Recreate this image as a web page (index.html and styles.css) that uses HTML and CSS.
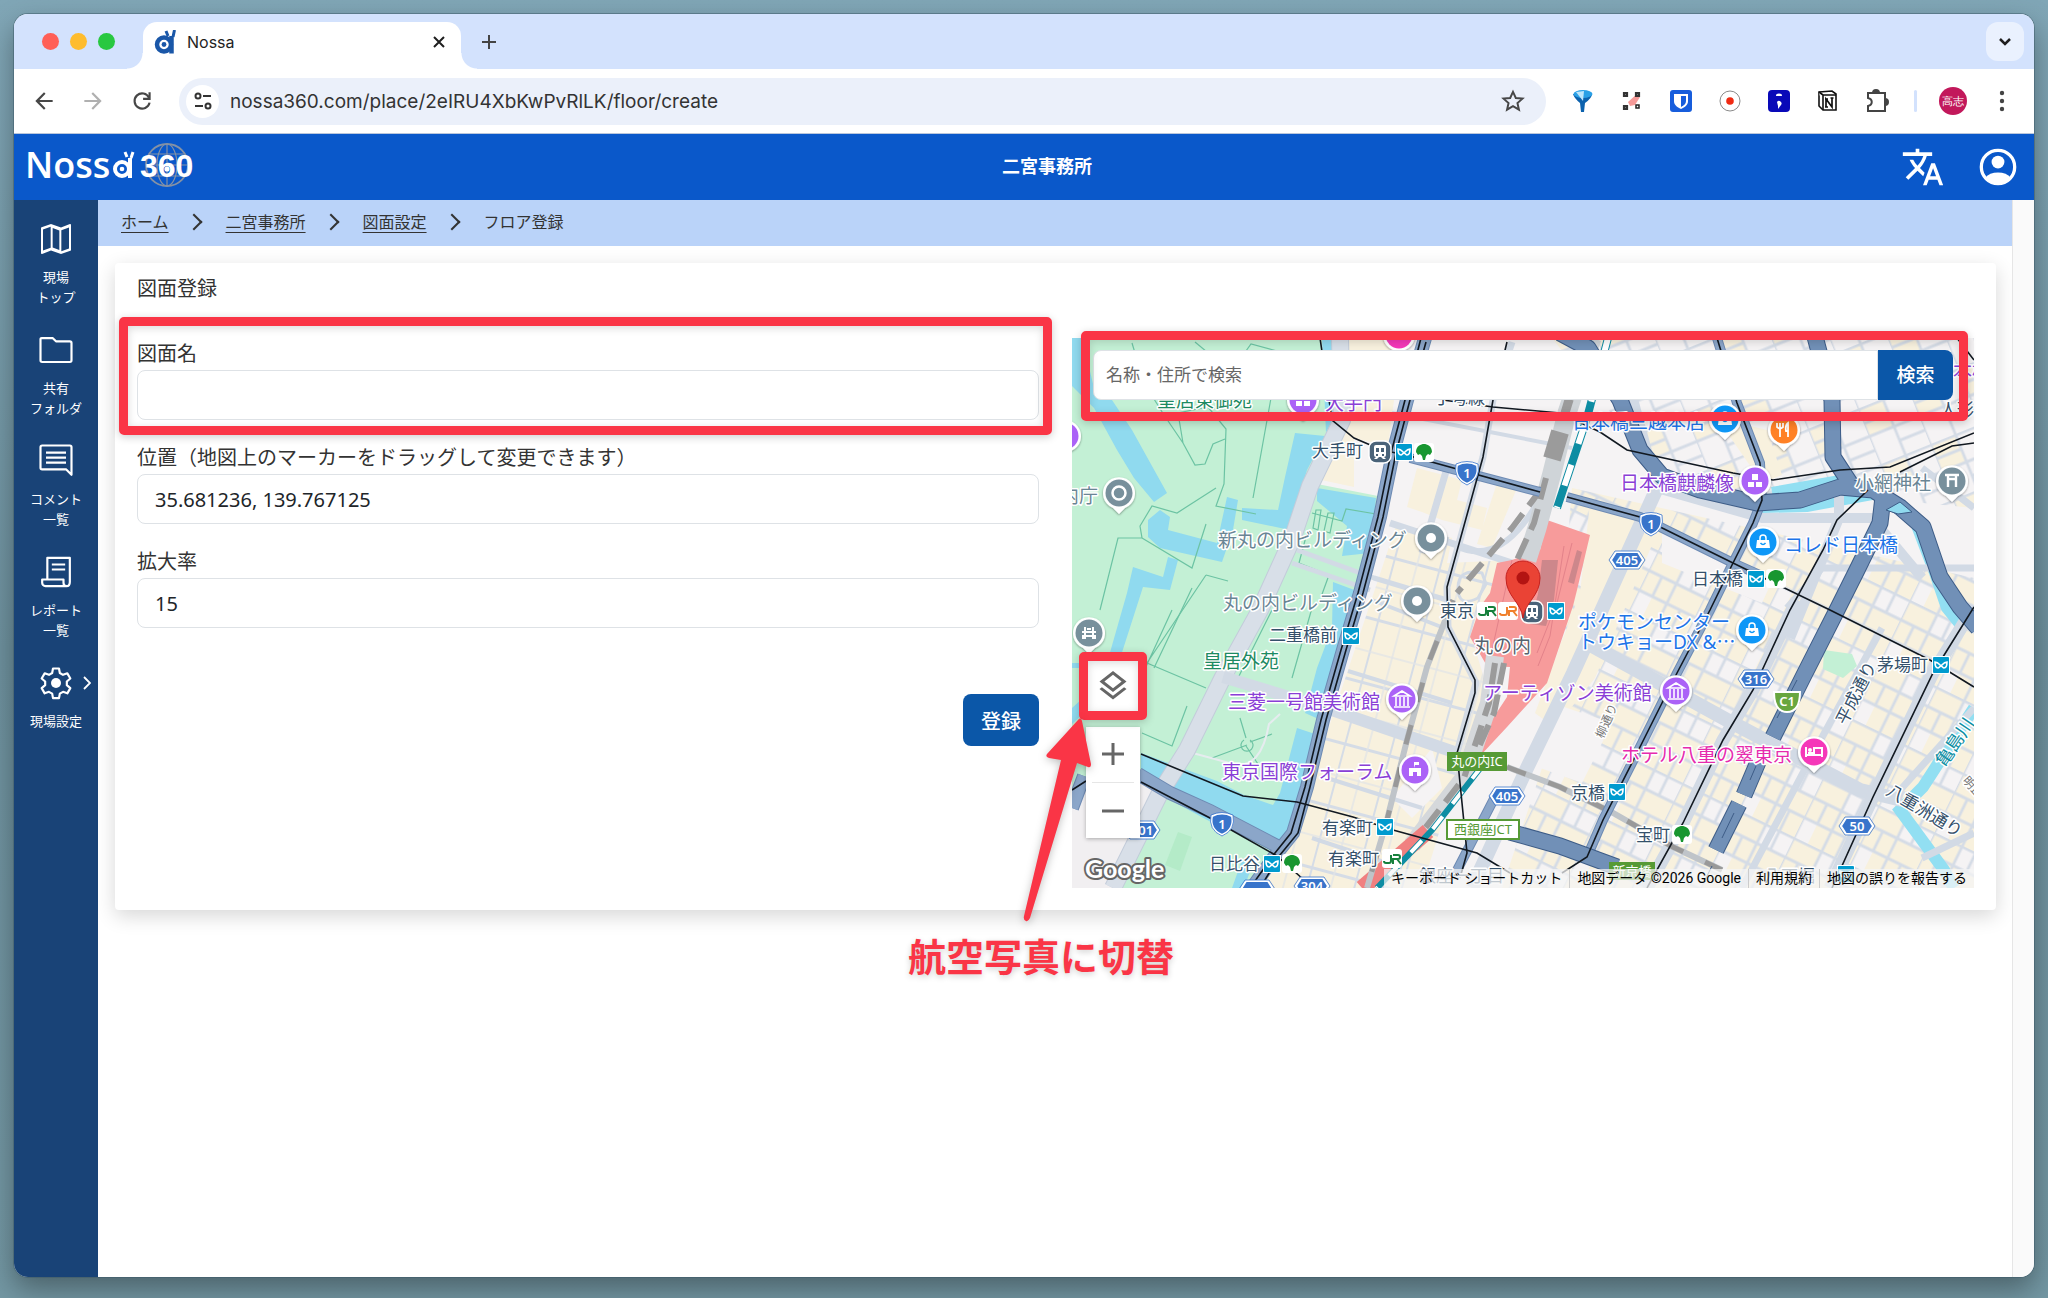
FILE: index.html
```html
<!DOCTYPE html>
<html lang="ja">
<head>
  <meta charset="UTF-8">
  <title>Nossa</title>
  <meta name="viewport" content="width=device-width, initial-scale=1.0">
  <link rel="stylesheet" href="styles.css">
</head>
<body>
  <div class="window">
    <div class="tab-strip">
      <div class="lights"><i class="red"></i><i class="yellow"></i><i class="green"></i></div>
      <div class="tab">
        <svg width="22" height="24" viewBox="0 0 22 24" fill="none" stroke="#1a57a8"><circle cx="10" cy="14.500" r="7" stroke-width="4.500"/><path d="M17.500 23.500V6" stroke-width="4.500"/><path d="M14 6l-2-5M19 7l1.500-7" stroke-width="3"/><circle cx="10" cy="14.500" r="2.400" fill="#1a57a8" stroke="none"/></svg>
        <span class="tab-title">Nossa</span>
        <button class="tab-close" aria-label="タブを閉じる"><svg width="12" height="12" viewBox="0 0 12 12" stroke="#1f1f1f" stroke-width="2"><path d="M1 1l10 10M11 1L1 11"/></svg></button>
      </div>
      <button class="new-tab" aria-label="新しいタブ"><svg width="16" height="16" viewBox="0 0 16 16" stroke="#444" stroke-width="2"><path d="M8 1v14M1 8h14"/></svg></button>
      <button class="tab-search" aria-label="タブを検索"><svg width="14" height="10" viewBox="0 0 14 10" fill="none" stroke="#1f1f1f" stroke-width="2.500"><path d="M2 2l5 5 5-5"/></svg></button>
    </div>

    <div class="toolbar">
      <button aria-label="戻る"><svg width="26" height="26" viewBox="0 0 24 24" fill="#474747"><path d="M20 11H7.830l5.590-5.590L12 4l-8 8 8 8 1.410-1.410L7.830 13H20v-2z"/></svg></button>
      <button aria-label="進む"><svg width="26" height="26" viewBox="0 0 24 24" fill="#b0b0b0"><path d="M12 4l-1.410 1.410L16.170 11H4v2h12.170l-5.580 5.590L12 20l8-8z"/></svg></button>
      <button aria-label="再読み込み"><svg width="26" height="26" viewBox="0 0 24 24" fill="none" stroke="#474747" stroke-width="2"><path d="M18.500 9A7 7 0 1 0 19 13.500"/><path d="M19 4v6h-6"/></svg></button>
      <div class="address">
        <span class="site-info"><svg width="20" height="20" viewBox="0 0 20 20" fill="none" stroke="#333" stroke-width="2"><circle cx="5" cy="5" r="2.500"/><path d="M10 5h8M2 15h8"/><circle cx="15" cy="15" r="2.500"/></svg></span>
        <input type="text" aria-label="アドレス" value="nossa360.com/place/2eIRU4XbKwPvRlLK/floor/create">
        <button aria-label="ブックマーク"><svg width="26" height="26" viewBox="0 0 24 24" fill="none" stroke="#474747" stroke-width="1.800"><path d="M12 3.500l2.600 5.700 6.200.6-4.700 4.100 1.400 6.100-5.500-3.200-5.500 3.200 1.400-6.100-4.700-4.100 6.200-.6z"/></svg></button>
      </div>
      <div class="extensions">
        <button aria-label="拡張機能 1"><svg width="22" height="24" viewBox="0 0 22 24"><path d="M1 5q1 4 7 9l1 9h3l1-9q7-5 7-9z" fill="#0c62ae"/><ellipse cx="11" cy="5" rx="9.500" ry="4" fill="#2aa0e6"/><path d="M4 3l7 9 1-10z" fill="#bfe6fb"/></svg></button>
        <button aria-label="拡張機能 2"><svg width="22" height="22" viewBox="0 0 22 22"><path d="M7 12l10-9 2 4-5 8-5 1z" fill="#f59a98"/><path d="M3 3h3v3H3zM15 3h3v3h-3zM3 16h3v3H3z" fill="#888" stroke="#333" stroke-width="2.200"/><path d="M15 15h3v3h-3z" fill="#fff" stroke="#222" stroke-width="1.500"/></svg></button>
        <button aria-label="拡張機能 3"><svg width="22" height="22" viewBox="0 0 22 22"><rect width="22" height="22" rx="3" fill="#175ddc"/><path d="M4 4h14v7c0 4-3 6-7 8-4-2-7-4-7-8z" fill="#fff"/><path d="M11 6h5v5c0 3-2 4-5 6z" fill="#175ddc"/></svg></button>
        <button aria-label="拡張機能 4"><svg width="22" height="22" viewBox="0 0 22 22"><circle cx="11" cy="11" r="10" fill="#fff" stroke="#8a8a8a"/><circle cx="11" cy="11" r="3.800" fill="#f02a12"/></svg></button>
        <button aria-label="拡張機能 5"><svg width="22" height="22" viewBox="0 0 22 22"><rect width="22" height="22" rx="4" fill="#0909b8"/><path d="M8 6a3 2.400 0 0 1 6 0zM9 12a2.500 2.500 0 1 1 4 3l-3 4 0-3z" fill="#fff"/></svg></button>
        <button aria-label="拡張機能 6"><svg width="22" height="22" viewBox="0 0 22 22" fill="#fff" stroke="#111" stroke-width="1.600"><path d="M2 2l13-1 4 3v16H6l-4-4z"/><path d="M2 2l4 3v15M6 5h13"/><path d="M9 17V9l6 8V8M8 9h3M13.500 8h3M8 17h3" stroke-width="1.700"/></svg></button>
        <button aria-label="拡張機能"><svg width="24" height="26" viewBox="0 0 24 26" fill="none" stroke="#444" stroke-width="2"><path d="M3 5h17v18H3v-5c5-1 5-7 0-8z"/><path d="M8 5a3 3 0 0 1 6 0zM20 11a3 3 0 0 1 0 6z" fill="#444"/></svg></button>
      </div>
      <span class="divider"></span>
      <button class="avatar">高志</button>
      <button class="kebab" aria-label="メニュー"><svg width="6" height="22" viewBox="0 0 6 22" fill="#444"><circle cx="3" cy="3" r="2.200"/><circle cx="3" cy="11" r="2.200"/><circle cx="3" cy="19" r="2.200"/></svg></button>
    </div>

    <header class="app-header">
      <a class="logo" href="#" aria-label="Nossa 360">
        <svg width="180" height="48" viewBox="0 0 180 48" fill="#fff">
          <g fill="none" stroke="#8491a5" stroke-width="1.200"><circle cx="141" cy="22" r="21" stroke-width="1.800"/><ellipse cx="141" cy="22" rx="10" ry="21"/><path d="M141 1v42M120 22h42M123 11h36M123 33h36"/></g>
          <text class="logo-text" x="-1" y="35">Noss</text>
          <g fill="none" stroke="#fff"><circle cx="96" cy="26" r="7" stroke-width="4"/><path d="M104 35V15" stroke-width="4"/><path d="M101 14l-2-5M105 15l2-6" stroke-width="3"/></g>
          <circle cx="96" cy="26" r="2.300"/>
          <text class="logo-number" x="114" y="34">360</text>
          <circle cx="141" cy="26" r="2.600"/>
        </svg>
      </a>
      <h1>二宮事務所</h1>
      <div class="header-actions">
        <button aria-label="言語"><svg width="44" height="44" viewBox="0 0 24 24" fill="#fff"><path d="M12.870 15.070l-2.540-2.510.03-.03c1.740-1.940 2.980-4.170 3.710-6.530H17V4h-7V2H8v2H1v1.990h11.170C11.500 7.920 10.440 9.750 9 11.350 8.070 10.320 7.300 9.190 6.690 8h-2c.73 1.630 1.730 3.170 2.980 4.560l-5.090 5.020L4 19l5-5 3.110 3.110.76-2.040zM18.500 10h-2L12 22h2l1.120-3h4.750L21 22h2l-4.500-12zm-2.620 7l1.620-4.330L19.120 17h-3.240z"/></svg></button>
        <button aria-label="アカウント"><svg width="44" height="44" viewBox="0 0 24 24" fill="#fff"><circle cx="12" cy="12" r="9.100" fill="none" stroke="#fff" stroke-width="1.800"/><circle cx="12" cy="9.300" r="3.500"/><path d="M5 18c1.500-2 4-3 7-3s5.500 1 7 3c-1.500 2-4 3.300-7 3.300S6.500 20 5 18z"/></svg></button>
      </div>
    </header>

    <div class="app-body">
      <nav class="sidebar">
        <a href="#"><svg width="40" height="40" viewBox="0 0 24 24"><path d="M20.500 3l-.16.03L15 5.100 9 3 3.360 4.900c-.21.07-.36.25-.36.48V20.500c0 .28.22.5.5.5l.16-.03L9 18.900l6 2.100 5.640-1.900c.21-.07.36-.25.36-.48V3.500c0-.28-.22-.5-.5-.5zM10 5.470l4 1.400v11.660l-4-1.400V5.470zm-5.800.8L8.800 4.700v12.600l-4.600 1.600zM19.800 17.700l-4.600 1.600V6.700l4.600-1.600z"/></svg><span>現場<br>トップ</span></a>
        <a href="#"><svg width="40" height="40" viewBox="0 0 24 24"><path fill="none" stroke="#fff" stroke-width="1.300" stroke-linejoin="round" d="M2.700 5.300v12.900c0 .6.400 1 1 1h16.600c.6 0 1-.4 1-1V7.800c0-.6-.4-1-1-1H12l-1.900-1.900H3.400c-.4 0-.7.100-.7.400z"/></svg><span>共有<br>フォルダ</span></a>
        <a href="#"><svg width="40" height="40" viewBox="0 0 24 24"><path fill="none" stroke="#fff" stroke-width="1.300" stroke-linejoin="round" d="M2.700 3.700c0-.6.400-1 1-1h16.600c.6 0 1 .4 1 1v16.600L18 17H3.700c-.6 0-1-.4-1-1zM6 7h12M6 10h12M6 13h12"/></svg><span>コメント<br>一覧</span></a>
        <a href="#"><svg width="40" height="40" viewBox="0 0 24 24"><path fill="none" stroke="#fff" stroke-width="1.300" stroke-linejoin="round" d="M6.800 16.500V3.500h13.500V18c0 1.500-.8 2.500-2 2.500H5.700c-1.200 0-2-1-2-2v-2h12.800v2c0 1.200.7 2 1.800 2M9.500 7.500h8M9.500 10.500h8"/></svg><span>レポート<br>一覧</span></a>
        <a href="#" class="has-sub"><svg width="40" height="40" viewBox="0 0 24 24"><path fill="none" stroke="#fff" stroke-width="1.300" stroke-linejoin="round" d="M10.200 3.300h3.600l.5 2.700 1.900 1.100 2.600-.9 1.800 3.100-2.100 1.800v2.200l2.100 1.800-1.800 3.100-2.600-.9-1.900 1.100-.5 2.700h-3.600l-.5-2.700-1.900-1.100-2.600.9-1.800-3.100 2.100-1.800v-2.200L3.400 9.300l1.800-3.100 2.600.9L9.700 6z"/><circle cx="12" cy="12" r="3"/></svg><span>現場設定</span><svg class="sub-mark" width="8" height="14" viewBox="0 0 8 14" fill="none" stroke="#fff" stroke-width="1.800"><path d="M1 1l6 6-6 6"/></svg></a>
      </nav>

      <main class="content">
        <nav class="breadcrumb">
          <a href="#">ホーム</a>
          <a href="#">二宮事務所</a>
          <a href="#">図面設定</a>
          <span>フロア登録</span>
        </nav>

        <section class="card">
          <h2>図面登録</h2>
          <div class="columns">
            <form class="floor-form">
              <div class="field highlighted">
                <label for="name">図面名</label>
                <input type="text" id="name">
              </div>
              <div class="field">
                <label for="position">位置（地図上のマーカーをドラッグして変更できます）</label>
                <input type="text" id="position" value="35.681236, 139.767125">
              </div>
              <div class="field">
                <label for="zoom">拡大率</label>
                <input type="text" id="zoom" value="15">
              </div>
              <button type="button" class="btn-primary">登録</button>
            </form>

            <div class="map">
              <svg class="map-canvas" viewBox="0 0 902 550" preserveAspectRatio="xMidYMid slice">
                <defs>
                  <pattern id="streets-east" width="62" height="66" patternUnits="userSpaceOnUse" patternTransform="rotate(26)">
                    <rect width="62" height="66" fill="#f8f1de"/>
                    <path d="M31 0h31v22H31zM0 44h15v22H0z" fill="#f5f3f4"/>
                    <path d="M0 0v66M31 0v66M0 1h62M0 22h62M0 44h62M15 22v22M46 0v22M46 44v22" stroke="#d5dce6" stroke-width="2.800"/>
                  </pattern>
                  <pattern id="streets-mid" width="46" height="64" patternUnits="userSpaceOnUse" patternTransform="rotate(15)">
                    <rect width="46" height="64" fill="#f8f1de"/>
                    <path d="M0 0v64M0 1h46" stroke="#d5dce6" stroke-width="4"/>
                    <path d="M24 0v64M0 34h46" stroke="#e3e5e6" stroke-width="1.500"/>
                  </pattern>
                  <pattern id="streets-north" width="54" height="60" patternUnits="userSpaceOnUse" patternTransform="rotate(-22)">
                    <rect width="54" height="60" fill="#f5f3f4"/>
                    <path d="M0 0h27v30H0z" fill="#f8f1de"/>
                    <path d="M0 0v60M27 0v60M0 1h54M0 30h54M0 16h27M27 45h27" stroke="#d5dce6" stroke-width="2.800"/>
                  </pattern>
                  <filter id="soft" x="-30%" y="-30%" width="160%" height="170%"><feDropShadow dx="0" dy="1" stdDeviation="1" flood-opacity=".4"/></filter>
                  <path id="pin" d="M0 21L-6 15A16 16 0 1 1 6 15z" fill="#fff" filter="url(#soft)"/>
                  <g id="metro"><rect x="-9" y="-9" width="18" height="18" fill="#fff"/><rect x="-8" y="-8" width="16" height="16" rx="1" fill="#009bcf"/><path d="M-6-3c0 3 0 6 3 6 1 0 2-2 3-2s2 2 3 2c3 0 3-3 3-6-3 0-4 2-6 4-2-2-3-4-6-4z" fill="none" stroke="#fff" stroke-width="1.600"/></g>
                  <g id="toei"><rect x="-10" y="-9" width="20" height="19" rx="3" fill="#fff"/><path d="M1 8H-1L-2 4-4 2-6 3-8 0C-8-6-3-8 0-8s8 2 8 8l-2 3-2-1-2 2z" fill="#189630"/></g>
                  <g id="train"><rect x="-11" y="-11" width="22" height="22" rx="7" fill="#4a6379" stroke="#fff" stroke-width="1.500"/><path d="M-6-5q0-2 2-2h8q2 0 2 2v8q0 2-2 2l2 2h-3l-2-2h-2l-2 2h-3l2-2q-2 0-2-2z" fill="#fff"/><path d="M-4-4h3v4h-3zM1-4h3v4H1zM-4 2h2v2h-2zM2 2h2v2H2z" fill="#4a6379"/></g>
                  <g id="shield"><path d="M-10-8Q0-13 10-8 13 5 0 11-13 5-10-8z" fill="#3874cb" stroke="#fff" stroke-width="2"/><path d="M-11-9Q0-14 11-9 14 6 0 12-14 6-11-9z" fill="none" stroke="#3874cb" stroke-width=".8"/></g>
                  <g id="hex"><path d="M-11-8h22l5 8-5 8h-22l-5-8z" fill="#3874cb" stroke="#fff" stroke-width="2"/><path d="M-12-9h24l6 9-6 9h-24l-6-9z" fill="none" stroke="#3874cb" stroke-width=".8"/></g>
                  <g id="bag"><circle r="13.500" fill="#0e97f7"/><path d="M-6-2H6l1 8H-7z" fill="#fff"/><path d="M-3-2v-2a3 3 0 0 1 6 0v2" fill="none" stroke="#fff" stroke-width="1.500"/><path d="M-2.500 1q2.500 3 5 0" stroke="#0e97f7" fill="none" stroke-width="1.500"/></g>
                  <g id="museum"><circle r="13.500" fill="#ab62f7"/><path d="M-8-3l8-5 8 5zM-8 8H8M-6-2v9M-2-2v9M2-2v9M6-2v9" fill="none" stroke="#fff" stroke-width="1.600"/></g>
                  <path id="jr" d="M-8 2q0 2 2 2h3q2 0 2-2v-6M1 5V0h5q2 0 2-2t-2-2H1M5 0l4 5" fill="none" stroke-width="2"/>
                </defs>

                <!-- land -->
                <rect width="902" height="550" fill="#f5f3f4"/>
                <path d="M480 0H902V170L800 160 690 165 590 140z" fill="url(#streets-north)"/>
                <path d="M500 150L902 240V550H430L480 400z" fill="url(#streets-east)"/>
                <path d="M325 185L380 200 375 225 440 222 420 260 400 300 418 360 390 420 350 550H190L240 440z" fill="url(#streets-mid)"/>
                <path d="M262 0H330L310 155 240 140z" fill="#f8f1de"/>
                <path d="M345 130l45 12-5 20 30 8-5 22-40-10-20-8-15-5zM425 145l20 5-25 60-15-4z" fill="#f8f1de"/>
                <path d="M282 100l40 10-12 50-28-6z" fill="#f5f3f4"/>
                <path d="M518 165l45 15 20 20-60 140-40 50-20-15 45-120z" fill="#f8f1de"/>
                <path d="M645 80l50 12 15 45-20 8z" fill="#f8f1de"/>
                <path d="M590 190l70 35 40 18-10 22-40-16-60-24z" fill="#f5f3f4"/>
                <path d="M480 365l60 20-30 60-50-18zM320 460l40-50 10 40-30 30z" fill="#f5f3f4"/>
                <path d="M0 0H262L266 82 240 145 306 158 286 262 250 384 222 500 178 550H0z" fill="#c3f0d5"/>
                <path d="M0 452L90 440 88 470 42 550H0z" fill="#f1eff1"/>
                <path d="M106 494l14 5-12 34-15-6z" fill="#b4ebc8"/>
                <path d="M752 312l28 4 5 12-14 12-20-9z" fill="#c3f0d5"/>

                <!-- water -->
                <g fill="#90daef">
                  <path d="M0 0H10L22 50 40 62 60 92 95 155 82 164 62 140 45 112 22 70 0 48z"/>
                  <path d="M88 172l10 7-2 13 49 13 10-46 11 3-5 30-11 32-62-14-12-11V182z"/>
                  <path d="M61 229l30 10 5-20 10 3-8 30-27-3L45 330H0v-5h35l20-70z"/>
                  <path d="M223 95l30 3-18 34-17 60-48-10v-12l36 2 7-33zM250 0h10l6 70-12 25z"/>
                  <path d="M245 150l59 10-6 55-28 3 5-30-30-25z"/>
                  <path d="M261 244l24 9-10 50-24 80-18-8 12-45 15-40z"/>
                  <path d="M69 415l76 28 27 14 29 10 7-12 17-65 18 6-20 74-11 34-62-14-50-27-31-22z"/>
                  <path d="M0 370l20-18 2 14-22 20zM160 550l10-28 10 6-8 22z"/>
                </g>
                <g fill="none" stroke="#92dff2">
                  <path d="M902 370L851 449 828 472 872 532 882 550" stroke-width="12"/>
                  <path d="M690 170L735 169 800 157M700 154L768 142M843 185L862 235 874 270 890 290" stroke-width="10"/>
                </g>

                <!-- park paths -->
                <g fill="none" stroke="#6cc3a3" stroke-width="1.200">
                  <path d="M60 5l12 40 20 32 19 28 12 22 10-1 8-20 12-5M111 105l-5-30 30-6 18 22-2 55-8 22 40 8M123 4l36 30 20-28 30 8M144 150L105 175 80 168 68 188 70 200 46 200 28 272M199 60l-18 100M70 200l50 30 14-44M120 250L82 330M134 237l22 6"/>
                  <path d="M134 237L75 325 134 350M75 325L45 360M100 272L55 370M200 272l-35 70M240 270l-20 70M70 395l30 13 15-40M175 407L140 420M174 400L168 380M174 408l12 18M178 404l22-8M172 402a6 6 0 1 0 6 0M235 195l-8 30 30 12-8 22M240 175l30 8 4-12 30 5"/>
                  <path d="M244 172l-3 18 5 2 3-20zM256 175l-4 18 6 2 4-20z"/>
                </g>
                <path d="M117 414l44 12q28 6 36-40l11-10" fill="none" stroke="#e6ecef" stroke-width="2"/>

                <!-- ordinary roads -->
                <g fill="none" stroke="#d2dae5" stroke-linejoin="round">
                  <path d="M268 0L270 82 238 148 221 199 188 272 151 339 115 412 88 455 41 550" stroke="#c3ccda" stroke-width="18"/>
                  <path d="M268 0L270 82 238 148 221 199 188 272 151 339 115 412 88 455 41 550" stroke="#d8dfe8" stroke-width="16"/>
                  <path d="M151 339L260 372 385 415" stroke-width="12"/>
                  <path d="M225 212L302 240 375 262M220 225L298 252" stroke-width="5"/>
                  <path d="M375 130L350 215M318 185L440 225M440 4L421 62 411 119 375 249 376 289 404 345 385 415" stroke-width="7"/>
                  <path d="M320 20L480 60M320 75L500 110" stroke-width="4"/>
                  <path d="M384 208Q430 230 468 160" stroke-width="6"/>
                  <path d="M410 235q-24-5-24 15t20 10l8-14z" stroke-width="3"/>
                  <path d="M276 333L380 365M300 262L372 290M255 440L350 470M240 500L330 530" stroke-width="4"/>
                  <path d="M585 150L531 269 501 335 455 430 400 550" stroke-width="14"/>
                  <path d="M515 305L655 382 788 452 830 462" stroke-width="14"/>
                  <path d="M725 262L681 352 651 402 611 485 575 550" stroke-width="13"/>
                  <path d="M902 269L861 335 801 459 758 550" stroke-width="13"/>
                  <path d="M767 150V180L718 300M550 20L585 150 690 180 800 180 850 240" stroke-width="10"/>
                  <path d="M810 290L742 414 670 550M850 130L902 170M715 270L750 230 902 230M830 450L902 370M850 520L902 495" stroke-width="7"/>
                </g>

                <!-- railway and station -->
                <path d="M475 182L518 197 505 252 501 268 475 345 435 389 408 418 402 409 435 359 438 329 415 328 398 299 408 269 418 255 425 225 440 222 468 212z" fill="#f79b9b"/>
                <path d="M470 222h16l-4 40-8 26-16-2 8-30zM505 212l5 2-8 32-6-2z" fill="#cd878b"/>
                <path d="M500 205l-15 60-20 50M492 208l-14 90-12 30M440 222l-20 90" stroke="#e3828a" fill="none"/>
                <g fill="none">
                  <path d="M520 0L495 75 480 135 465 190 455 222" stroke="#cfd4d8" stroke-width="19"/>
                  <path d="M516 0L493 75" stroke="#9b9b9b" stroke-width="9" stroke-dasharray="20 12"/>
                  <path d="M488 94L480 121" stroke="#9b9b9b" stroke-width="18"/>
                  <path d="M474 140L462 185 445 222M470 150L440 190 385 255" stroke="#9b9b9b" stroke-width="6" stroke-dasharray="22 10"/>
                  <path d="M536 0L515 80 485 170" stroke="#0e8da3" stroke-width="8"/>
                  <path d="M536 0L515 80 485 170" stroke="#fff" stroke-width="6" stroke-dasharray="22 22"/>
                  <path d="M423 318L417 365 392 440 340 507" stroke="#d5d8db" stroke-width="18"/>
                  <path d="M423 325L417 365 392 440 340 507M432 325L422 375 402 420" stroke="#9b9b9b" stroke-width="6" stroke-dasharray="22 10"/>
                  <path d="M356 493L290 550" stroke="#f08080" stroke-width="16"/>
                  <path d="M410 428L360 492 305 550" stroke="#0e8da3" stroke-width="6"/>
                  <path d="M410 428L360 492 305 550" stroke="#fff" stroke-width="4" stroke-dasharray="16 16"/>
                  <path d="M381 262L355 329 335 402 315 482 295 550M435 429L488 449 541 475 601 509 650 532" stroke="#bfc4c9" stroke-width="6"/>
                  <path d="M381 262L355 329 335 402 315 482 295 550M435 429L488 449 541 475 601 509 650 532" stroke="#999" stroke-width="5" stroke-dasharray="20 24"/>
                </g>

                <!-- trunk roads -->
                <g fill="none" stroke="#6d8ab3" stroke-width="14">
                  <path d="M353 0L335 62 321 115 308 179 288 255 271 312 251 382 235 449 221 495 205 515 180 550M0 470L12 438M66 436L98 455 138 473 205 508"/>
                  <path d="M338 120L468 154M495 159L568 179 661 225 690 238M645 0L665 65 688 125 690 162 681 185 661 225 638 272 605 335 565 415 531 482 515 519M425 455L381 540" stroke-width="10"/>
                </g>
                <g fill="none" stroke="#8ba6c9" stroke-width="12">
                  <path d="M353 0L335 62 321 115 308 179 288 255 271 312 251 382 235 449 221 495 205 515 180 550M0 470L12 438M66 436L98 455 138 473 205 508"/>
                  <path d="M338 120L468 154M495 159L568 179 661 225 690 238M645 0L665 65 688 125 690 162 681 185 661 225 638 272 605 335 565 415 531 482 515 519M425 455L381 540" stroke-width="8"/>
                </g>
                <g fill="none" stroke-linejoin="round">
                  <path d="M488-5L516 10 548 62 568 112 590 138 628 152 685 165 728 162 768 149 801 152 828 169 851 189 868 239 888 269 906 290M742-5L760 62 761 119 778 145M811 159L808 185 785 232 765 272 731 339 701 399M686 424L672 457M667 466L644 512M438 494L488 508 545 529" stroke="#3d5c87" stroke-width="17"/>
                  <path d="M488-5L516 10 548 62 568 112 590 138 628 152 685 165 728 162 768 149 801 152 828 169 851 189 868 239 888 269 906 290M742-5L760 62 761 119 778 145M811 159L808 185 785 232 765 272 731 339 701 399M686 424L672 457M667 466L644 512M438 494L488 508 545 529" stroke="#7190b7" stroke-width="15"/>
                  <path d="M678 442l6-14M650 500l12-25M705 380l20-38M640 528l-8 16" stroke="#3d5c87"/>
                  <path d="M814 172l14-8 12 10-14 2z" fill="#90daef" stroke="#3d5c87"/>
                </g>

                <!-- subway lines -->
                <g fill="none" stroke="#111820" stroke-width="1.600">
                  <path d="M349 0L333 62 319 115 306 179 286 255 269 312 249 382 233 449 219 495 203 515 178 550M354 4L338 62 324 115 311 179 291 255 274 312 254 382 238 449 226 495 208 517 188 550"/>
                  <path d="M248 0L260 82 282 100 310 112 338 118 468 154M495 159L568 179 661 225 758 272 858 322 902 349"/>
                  <path d="M69 416L171 458 225 464 281 479 321 492 405 515 438 535M0 452L14 443M69 444L138 480 205 518 232 542"/>
                  <path d="M435 4L421 62 411 119 375 249 376 289 403 342 403 355 385 415 395 515 388 540"/>
                  <path d="M371 62L421 69 488 75 528 94 555 112 661 135 701 142 768 132 818 129 902 95M828 134L880 108 902 105M796 152L765 182 751 212 718 272 681 352 651 402 611 485 575 550"/>
                  <path d="M645 0L665 65 688 125 690 162 681 185 661 225 638 272 605 335 565 415 531 482 515 519 490 535M902 269L861 335 801 459 760 550M885 0L902 22"/>
                </g>

                <!-- expressway signs and route numbers -->
                <rect x="375" y="414" width="60" height="19" fill="#569a35"/>
                <rect x="375" y="482" width="72" height="19" fill="#fff" stroke="#569a35" stroke-width="2"/>
                <rect x="537" y="524" width="46" height="18" fill="#569a35"/>
                <g class="sign"><text x="405" y="428">丸の内IC</text><text x="411" y="496" class="sign-green">西銀座JCT</text><text x="560" y="538">新京橋</text></g>
                <use href="#shield" x="395" y="135"/><use href="#shield" x="579" y="186"/><use href="#shield" x="150" y="486"/>
                <use href="#hex" x="555" y="222"/><use href="#hex" x="435" y="458"/><use href="#hex" x="684" y="341"/><use href="#hex" x="70" y="492"/><use href="#hex" x="240" y="548"/><use href="#hex" x="185" y="551"/>
                <use href="#hex" x="785" y="488"/>
                <path d="M702 354h26q0 20-13 20t-13-20z" fill="#68a63f" stroke="#fff" stroke-width="2"/>
                <g class="route"><text x="395" y="140">1</text><text x="579" y="191">1</text><text x="150" y="491">1</text><text x="555" y="227">405</text><text x="435" y="463">405</text><text x="684" y="346">316</text><text x="785" y="493">50</text><text x="715" y="368">C1</text><text x="70" y="497">301</text><text x="240" y="553">304</text></g>

                <!-- place names -->
                <g class="place grey"><text x="-12" y="165">内庁</text><text x="146" y="209">新丸の内ビルディング</text><text x="151" y="272">丸の内ビルディング</text><text x="783" y="152">小網神社</text></g>
                <g class="place green"><text x="85" y="69">皇居東御苑</text><text x="131" y="330">皇居外苑</text></g>
                <g class="place purple"><text x="253" y="72">大手門</text><text x="156" y="371">三菱一号館美術館</text><text x="150" y="441">東京国際フォーラム</text><text x="411" y="362">アーティゾン美術館</text><text x="548" y="152">日本橋麒麟像</text><text x="881" y="40">本橋</text></g>
                <g class="place blue"><text x="500" y="91">日本橋三越本店</text><text x="712" y="214">コレド日本橋</text><text x="506" y="291">ポケモンセンター</text><text x="506" y="311">トウキョーDX &amp;⋯</text></g>
                <g class="place pink"><text x="549" y="424">ホテル八重の翠東京</text></g>
                <g class="place"><text x="402" y="315">丸の内</text></g>
                <g class="place station"><text x="240" y="119">大手町</text><text x="197" y="303">二重橋前</text><text x="250" y="496">有楽町</text><text x="256" y="527">有楽町</text><text x="137" y="532">日比谷</text><text x="368" y="279">東京</text><text x="620" y="247">日本橋</text><text x="805" y="333">茅場町</text><text x="499" y="461">京橋</text><text x="564" y="503">宝町</text><text x="868" y="78">人形町</text><text x="347" y="544">銀座一丁目</text><text x="692" y="544">八丁堀</text><text x="362" y="66">丁号線</text></g>
                <g class="place station"><text transform="translate(774 388) rotate(-63)">平成通り</text><text transform="translate(813 456) rotate(31)">八重洲通り</text></g>
                <g class="place river"><text transform="translate(873 430) rotate(-56)">亀島川</text></g>
                <g class="place small"><text transform="translate(531 401) rotate(-66)">柳通り</text><text transform="translate(890 443) rotate(48)">明正通り</text></g>

                <!-- station marks -->
                <use href="#train" x="308" y="114"/><use href="#train" x="460" y="274"/>
                <use href="#metro" x="332" y="114"/><use href="#metro" x="279" y="298"/><use href="#metro" x="313" y="489"/><use href="#metro" x="200" y="526"/><use href="#metro" x="484" y="273"/><use href="#metro" x="684" y="241"/><use href="#metro" x="869" y="327"/><use href="#metro" x="545" y="454"/><use href="#metro" x="774" y="536"/>
                <use href="#toei" x="352" y="114"/><use href="#toei" x="220" y="525"/><use href="#toei" x="704" y="240"/><use href="#toei" x="610" y="496"/>
                <g fill="#fff"><rect x="405" y="264" width="20" height="18" rx="3"/><rect x="426" y="264" width="20" height="18" rx="3"/><rect x="310" y="511" width="20" height="19" rx="3"/></g>
                <use href="#jr" x="415" y="273" stroke="#16803c"/><use href="#jr" x="436" y="273" stroke="#f0802c"/><use href="#jr" x="320" y="521" stroke="#16803c"/>

                <!-- pins -->
                <g transform="translate(47 155)"><use href="#pin"/><circle r="13.500" fill="#78909c"/><circle r="6.500" fill="none" stroke="#fff" stroke-width="2.500"/></g>
                <g transform="translate(359 200)"><use href="#pin"/><circle r="13.500" fill="#78909c"/><circle r="5" fill="#fff"/></g>
                <g transform="translate(345 263)"><use href="#pin"/><circle r="13.500" fill="#78909c"/><circle r="5" fill="#fff"/></g>
                <g transform="translate(17 295)"><use href="#pin"/><circle r="13.500" fill="#78909c"/><path d="M-7-1H7M-7 3H7M-4-6V5M4-6V5M-7 5h4M3 5h4M-2-4h4" stroke="#fff" stroke-width="2"/></g>
                <g transform="translate(880 143)"><use href="#pin"/><circle r="13.500" fill="#78909c"/><path d="M-7-6H7M-5-2H5M-4-6V6M4-6V6" stroke="#fff" stroke-width="2.400"/></g>
                <g transform="translate(-7 98)"><use href="#pin"/><circle r="13.500" fill="#ab62f7"/></g>
                <g transform="translate(231 62)"><use href="#pin"/><circle r="13.500" fill="#ab62f7"/><path d="M-7 1h6v5h-6zM1 1h6v5H1z" fill="#fff"/></g>
                <g transform="translate(327 -3)"><use href="#pin"/><circle r="13.500" fill="#f538b9"/></g>
                <g transform="translate(683 143)"><use href="#pin"/><circle r="13.500" fill="#ab62f7"/><path d="M-3-7h6v6h-6zM-7 1h6v5h-6zM1 1h6v5H1z" fill="#fff"/></g>
                <g transform="translate(343 432)"><use href="#pin"/><circle r="13.500" fill="#ab62f7"/><path d="M-6 6V-2H6V6H2V2h-4v4zM-1-2v-6h5v3H0" fill="#fff"/></g>
                <g transform="translate(330 361)"><use href="#pin"/><use href="#museum"/></g>
                <g transform="translate(604 353)"><use href="#pin"/><use href="#museum"/></g>
                <g transform="translate(653 81)"><use href="#pin"/><use href="#bag"/></g>
                <g transform="translate(691 204)"><use href="#pin"/><use href="#bag"/></g>
                <g transform="translate(680 292)"><use href="#pin"/><use href="#bag"/></g>
                <g transform="translate(712 92)"><use href="#pin"/><circle r="13.500" fill="#ff8126"/><path d="M-4-7V7M-7-7v4q3 3 6 0v-4M4 7V-7q-3 2-2 8h2" fill="none" stroke="#fff" stroke-width="1.800"/></g>
                <g transform="translate(742 414)"><use href="#pin"/><circle r="13.500" fill="#f538b9"/><path d="M-8-5V5M-8 3H8M8 5V-4H0v5h-6" fill="none" stroke="#fff" stroke-width="2"/><circle cx="-4" cy="-2" r="2" fill="#fff"/></g>
                <path d="M451 280C449 264 434 258 434 240a17 17 0 0 1 34 0c0 18-15 24-17 40z" fill="#ea4335" stroke="#c5221f"/>
                <circle cx="451" cy="240" r="6.500" fill="#b31412"/>

                <text class="google" x="13" y="540">Google</text>
              </svg>

              <form class="map-search">
                <input type="text" aria-label="名称・住所で検索" placeholder="名称・住所で検索">
                <button type="button">検索</button>
              </form>
              <div class="map-controls">
                <button aria-label="航空写真"><svg width="36" height="36" viewBox="0 0 24 24" fill="#666"><path d="M11.990 18.540l-7.370-5.730L3 14.070l9 7 9-7-1.630-1.270-7.380 5.740zM12 16l7.360-5.730L21 9l-9-7-9 7 1.630 1.270L12 16zm0-11.470L17.740 9 12 13.470 6.260 9 12 4.530z"/></svg></button>
                <div class="zoom-buttons">
                  <button aria-label="拡大"><svg width="22" height="22" viewBox="0 0 22 22" stroke="#666" stroke-width="3"><path d="M11 0v22M0 11h22"/></svg></button>
                  <hr>
                  <button aria-label="縮小"><svg width="22" height="22" viewBox="0 0 22 22" stroke="#666" stroke-width="3"><path d="M0 11h22"/></svg></button>
                </div>
              </div>
              <div class="map-footer">
                <button>キーボード ショートカット</button>
                <span>地図データ ©2026 Google</span>
                <a href="#">利用規約</a>
                <a href="#">地図の誤りを報告する</a>
              </div>

              <div class="mark mark-search"></div>
              <div class="mark mark-layers"></div>
              <svg class="arrow" width="70" height="206" viewBox="0 0 70 206"><path d="M56 3q3-4 4 1l9 43q0 4-3 3l-11-4L8 201q-2 4-4 3-3-1-2-5L39 43l-12-2q-4-1-2-4z" fill="#fa3546"/></svg>
              <p class="caption">航空写真に切替</p>
            </div>
          </div>
        </section>
      </main>
      <div class="scrollbar"></div>
    </div>
  </div>
</body>
</html>
```
FILE: styles.css
```css
* {
  box-sizing: border-box;
}

body {
  margin: 0;
  min-height: 100vh;
  padding: 14px 14px 21px;
  display: flex;
  background: linear-gradient(#80a6b6, #6e919e 50%, #7397a3);
  font-family: "Noto Sans", "Noto Sans CJK JP", sans-serif;
  color: #333;
}

button,
input {
  font-family: inherit;
}

button {
  border: none;
  background: none;
  padding: 0;
  display: flex;
  align-items: center;
  justify-content: center;
}

svg {
  display: block;
}

.window {
  flex: 1;
  min-width: 0;
  display: flex;
  flex-direction: column;
  border-radius: 14px;
  overflow: hidden;
  background: #fff;
  box-shadow: 0 0 0 1px rgba(60, 90, 105, 0.5), 0 12px 28px rgba(0, 0, 0, 0.35);
}

/* browser chrome */
.tab-strip {
  height: 55px;
  padding: 8px 10px 0 28px;
  display: flex;
  background: #d3e2fd;
  font-family: Inter, sans-serif;
}

.lights {
  display: flex;
  gap: 11px;
  margin-top: 11px;
}

.lights i {
  width: 17px;
  height: 17px;
  border-radius: 50%;
}

.red { background: #ff5f57; }
.yellow { background: #febc2e; }
.green { background: #28c840; }

.tab {
  width: 318px;
  height: 47px;
  margin-left: 28px;
  padding: 0 16px 8px 11px;
  display: flex;
  align-items: center;
  gap: 11px;
  background: #fff;
  border-radius: 14px 14px 0 0;
  position: relative;
}

.tab::before,
.tab::after {
  content: "";
  position: absolute;
  bottom: 0;
  width: 16px;
  height: 16px;
}

.tab::before {
  left: -16px;
  background: radial-gradient(circle at 0 0, transparent 15px, #fff 16px);
}

.tab::after {
  right: -16px;
  background: radial-gradient(circle at 100% 0, transparent 15px, #fff 16px);
}

.tab-title {
  flex: 1;
  font-size: 16px;
  color: #1f1f1f;
}

.new-tab {
  height: 40px;
  margin-left: 20px;
}

.tab-search {
  width: 38px;
  height: 39px;
  margin-left: auto;
  border-radius: 12px;
  background: #eaf1fe;
}

.toolbar {
  height: 65px;
  padding: 0 29px 0 17px;
  display: flex;
  align-items: center;
  border-bottom: 1px solid #b9c6dc;
  font-family: Inter, sans-serif;
}

.toolbar > button + button {
  margin-left: 23px;
}

.address {
  flex: 1;
  height: 47px;
  margin-left: 24px;
  padding: 0 20px 0 7px;
  display: flex;
  align-items: center;
  border-radius: 24px;
  background: #ebf0fa;
}

.site-info {
  width: 33px;
  height: 33px;
  display: flex;
  align-items: center;
  justify-content: center;
  border-radius: 50%;
  background: #fff;
}

.address input {
  flex: 1;
  margin-left: 11px;
  padding: 0;
  border: none;
  background: none;
  font-size: 19px;
  color: #333;
}

.extensions {
  display: flex;
  margin-left: 12px;
}

.extensions button {
  width: 49px;
}

.divider {
  width: 3px;
  height: 22px;
  margin: 0 22px 0 13px;
  border-radius: 2px;
  background: #d3e2fd;
}

.avatar {
  width: 28px;
  height: 28px;
  border-radius: 50%;
  background: #c2185b;
  color: #fff;
  font-size: 11px;
}

.toolbar .kebab {
  margin-left: 32px;
}

/* app */
.app-header {
  height: 66px;
  padding: 0 14px 0 12px;
  display: grid;
  grid-template-columns: 1fr auto 1fr;
  align-items: center;
  background: #0a58ca;
  color: #fff;
}

.logo svg {
  overflow: visible;
}

.logo-text {
  font-family: "Open Sans", sans-serif;
  font-size: 36px;
  font-weight: 600;
}

.logo-number {
  font-family: "Liberation Sans", sans-serif;
  font-size: 32px;
  font-weight: 700;
}

.app-header h1 {
  margin: 0;
  padding: 0 0 4px 48px;
  font-size: 18px;
  font-weight: 700;
}

.header-actions {
  display: flex;
  justify-content: flex-end;
  gap: 31px;
}

.app-body {
  flex: 1;
  display: flex;
}

.sidebar {
  width: 84px;
  padding-top: 19px;
  display: flex;
  flex-direction: column;
  gap: 23px;
  background: #194377;
}

.sidebar a {
  position: relative;
  display: flex;
  flex-direction: column;
  align-items: center;
  gap: 8px;
  color: #fff;
  fill: #fff;
  font-size: 13px;
  line-height: 20px;
  text-align: center;
  text-decoration: none;
}

.sidebar .sub-mark {
  position: absolute;
  right: 7px;
  top: 13px;
}

.content {
  flex: 1;
  min-width: 0;
}

.scrollbar {
  width: 22px;
  background: #fafafa;
  border-left: 1px solid #e6e6e6;
}

.breadcrumb {
  height: 46px;
  padding: 0 23px 4px;
  display: flex;
  align-items: center;
  background: #bad3f9;
  font-size: 16px;
}

.breadcrumb a {
  color: #333;
  text-underline-offset: 4px;
}

.breadcrumb a::after {
  content: "";
  display: inline-block;
  width: 10px;
  height: 10px;
  margin: 0 26px 0 19px;
  border: solid #333;
  border-width: 2px 2px 0 0;
  transform: rotate(45deg);
}

.card {
  margin: 17px 16px 0 17px;
  padding: 12px 22px 22px;
  border-radius: 4px;
  background: #fff;
  box-shadow: 0 6px 20px rgba(0, 0, 0, 0.16);
}

.card h2 {
  margin: 0 0 35px;
  font-size: 20px;
  line-height: 28px;
  font-weight: 400;
}

.columns {
  display: grid;
  grid-template-columns: 1fr 1fr;
  gap: 33px;
}

.floor-form {
  display: flex;
  flex-direction: column;
  gap: 22px;
}

.field {
  position: relative;
  display: flex;
  flex-direction: column;
  gap: 1px;
}

.field label {
  font-size: 20px;
  line-height: 31px;
}

.field input {
  height: 50px;
  padding: 0 17px;
  border: 1px solid #dee2e6;
  border-radius: 8px;
  font-size: 20px;
  color: #212529;
}

.btn-primary {
  width: 76px;
  height: 52px;
  margin-top: 44px;
  align-self: flex-end;
  border-radius: 8px;
  background: #0b57a8;
  color: #fff;
  font-size: 20px;
  font-weight: 500;
}

/* red call-outs */
.highlighted::after,
.mark {
  content: "";
  position: absolute;
  border: 9px solid #fa3546;
  border-radius: 5px;
  box-shadow: 0 2px 8px rgba(0, 0, 0, 0.2), inset 0 2px 8px rgba(0, 0, 0, 0.15);
  pointer-events: none;
}

.highlighted::after {
  inset: -21px -13px -15px -18px;
}

.mark-search {
  top: -7px;
  left: 9px;
  right: 6px;
  height: 90px;
}

.mark-layers {
  top: 314px;
  left: 7px;
  width: 68px;
  height: 68px;
}

.arrow {
  position: absolute;
  top: 379px;
  left: -50px;
  filter: drop-shadow(0 2px 4px rgba(0, 0, 0, 0.25));
}

.caption {
  position: absolute;
  top: 591px;
  left: -164px;
  margin: 0;
  font-size: 38px;
  line-height: 54px;
  font-weight: 700;
  white-space: nowrap;
  color: #fa3546;
  text-shadow: 0 2px 6px rgba(0, 0, 0, 0.2);
}

/* map */
.map {
  position: relative;
  aspect-ratio: 41 / 25;
}

.map-canvas {
  width: 100%;
  height: 100%;
  overflow: hidden;
}

.place {
  font-size: 19px;
  fill: #55626e;
  stroke: #fff;
  stroke-width: 3px;
  stroke-linejoin: round;
  paint-order: stroke;
}

.place.grey { fill: #6a8594; }
.place.green { fill: #1d8a62; }
.place.purple { fill: #8a3fd6; }
.place.blue { fill: #1d74e8; }
.place.pink { fill: #e62bae; }
.place.river { fill: #0b8ea3; font-size: 18px; }
.place.small { fill: #777; font-size: 12px; }

.place.station {
  fill: #34506a;
  font-size: 17px;
}

.sign {
  fill: #fff;
  font-size: 13px;
  text-anchor: middle;
}

.sign-green {
  fill: #569a35;
}

.route {
  fill: #fff;
  font-size: 13px;
  font-weight: 600;
  text-anchor: middle;
}

.google {
  font-family: Lato, sans-serif;
  font-size: 25px;
  font-weight: 700;
  fill: #fff;
  stroke: #666;
  stroke-width: 4px;
  stroke-linejoin: round;
  paint-order: stroke;
}

.map-search {
  position: absolute;
  top: 12px;
  left: 21px;
  right: 21px;
  height: 50px;
  display: flex;
}

.map-search input {
  flex: 1;
  padding: 0 12px 2px;
  border: 1px solid #dee2e6;
  border-radius: 8px 0 0 8px;
  background: #fff;
  font-size: 17px;
}

.map-search input::placeholder {
  color: #666;
}

.map-search button {
  width: 75px;
  padding-bottom: 2px;
  border-radius: 0 8px 8px 0;
  background: #0b57a8;
  color: #fff;
  font-size: 19px;
  font-weight: 500;
}

.map-controls {
  position: absolute;
  top: 321px;
  left: 14px;
  width: 54px;
  display: flex;
  flex-direction: column;
  gap: 14px;
}

.map-controls button {
  width: 54px;
  height: 54px;
  background: #fff;
}

.zoom-buttons {
  background: #fff;
  box-shadow: 0 1px 4px rgba(0, 0, 0, 0.3);
}

.zoom-buttons hr {
  height: 1px;
  margin: 1px 6px;
  border: none;
  background: #e6e6e6;
}

.map-footer {
  position: absolute;
  right: 0;
  bottom: 0;
  height: 19px;
  display: flex;
  align-items: center;
  background: rgba(245, 245, 245, 0.72);
  font-family: Roboto, "Noto Sans CJK JP", sans-serif;
  font-size: 14px;
  line-height: 19px;
  color: #000;
}

.map-footer > * {
  padding: 0 7px;
  font: inherit;
  color: inherit;
  text-decoration: none;
}

.map-footer > * + * {
  border-left: 1px solid #ccc;
}
```
